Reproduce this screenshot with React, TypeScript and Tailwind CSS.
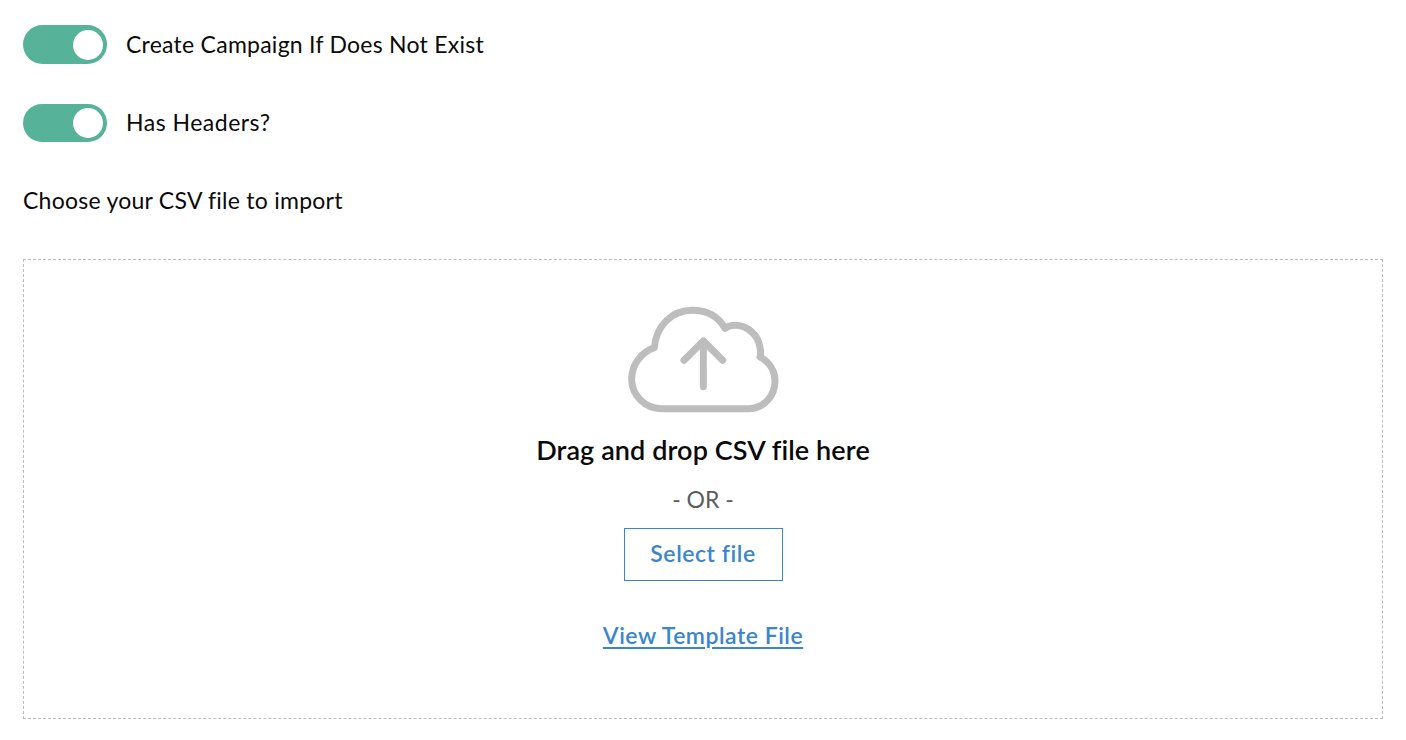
const font = "font-['Lato','Noto_Sans',sans-serif]";

function Toggle({ label, className, labelClass }: { label: string; className: string; labelClass: string }) {
  return (
    <div className={`flex items-center ${className}`}>
      <div className="flex h-full w-[84px] items-center justify-end rounded-full bg-[#56b298] pr-[4px]">
        <div className="size-[30px] rounded-full bg-white" />
      </div>
      <span className={`ml-[19px] pb-[1px] text-[23px] text-[#0a0a0a] ${labelClass}`}>{label}</span>
    </div>
  );
}

function CloudUpload() {
  return (
    <svg width="190" height="125" viewBox="-6 0 570 375" fill="none" stroke="#bdbdbd" strokeWidth="21" strokeLinecap="round" strokeLinejoin="round">
      <path d="M155 338H415C462 338 495 300 495 255C495 225 478 198 450 183C453 172 453 165 450 155C445 115 410 88 375 88C365 88 355 90 345 97C325 62 290 43 247 43C185 43 138 90 133 155C95 168 65 205 65 250C65 298 105 338 155 338Z" />
      <path d="M280 272V135M222 193L280 135L338 193" />
    </svg>
  );
}

export default function App() {
  return (
    <div className={`h-[740px] w-[1406px] overflow-hidden bg-white px-[23px] pt-[25px] ${font}`}>
      <Toggle label="Create Campaign If Does Not Exist" className="h-[39px]" labelClass="tracking-[0.25px]" />
      <Toggle label="Has Headers?" className="mt-[40px] h-[38px]" labelClass="tracking-[0.5px]" />
      <p className="mt-[43px] text-[23px] leading-[31px] tracking-[0.25px] text-[#0a0a0a]">Choose your CSV file to import</p>
      <div className="mt-[43px] flex h-[460px] w-[1360px] flex-col items-center border border-dashed border-[#bdbdbd] pt-[36px]">
        <CloudUpload />
        <p className="mt-[12px] text-[27px] leading-[34px] font-semibold tracking-[0.1px] text-[#0a0a0a]">Drag and drop CSV file here</p>
        <p className="mt-[17px] text-[23px] leading-[30px] text-[#5c5c5c]">- OR -</p>
        <button className="mt-[14px] flex h-[53px] w-[159px] items-center justify-center border border-[#3a86cc] pb-[2px] text-[23px] font-semibold tracking-[0.55px] text-[#3a86cc]">
          Select file
        </button>
        <a href="#" className="mt-[39px] text-[23px] leading-[31px] font-semibold tracking-[0.5px] text-[#3a86cc] underline underline-offset-[3px]">
          View Template File
        </a>
      </div>
    </div>
  );
}
